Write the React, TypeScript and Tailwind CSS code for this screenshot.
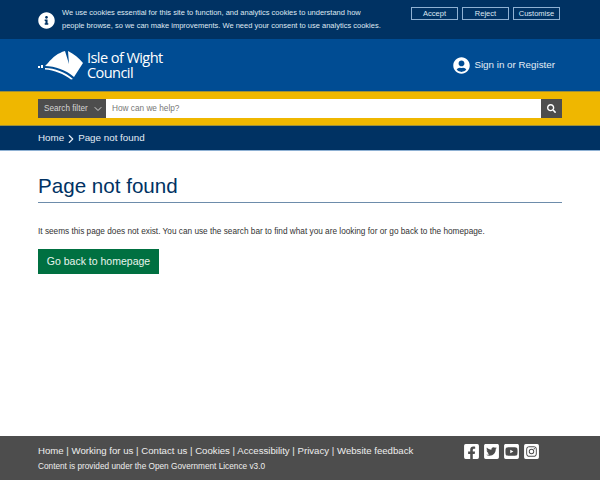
import { FaFacebookSquare, FaInfoCircle, FaInstagramSquare, FaSearch, FaTwitterSquare, FaUserCircle, FaYoutubeSquare } from "react-icons/fa";
import { ChevronDown, ChevronRight } from "lucide-react";

const footerLinks = ["Home", "Working for us", "Contact us", "Cookies", "Accessibility", "Privacy", "Website feedback"];

function Logo() {
  return (
    <svg width="46" height="30" viewBox="0 0 46 30" className="shrink-0">
      <path d="M10 13 C15 7 20 3 27 1 L31 14 L30 1 C36 4 41 8 45 13 L36 27 C28 20 17 16 7 16 Z" fill="#fff" />
      <path d="M7 18 C17 18 27 22 35 29 L33 29.5 C26 24 16 20 7 19.5 Z" fill="#fff" />
      <rect x="0" y="16" width="2" height="2" fill="#fff" />
      <rect x="3" y="15" width="2" height="3" fill="#fff" />
    </svg>
  );
}

export default function App() {
  return (
    <div className="flex h-[480px] w-[600px] flex-col overflow-hidden bg-white font-['Liberation_Sans',sans-serif] antialiased">
      {/* Cookie banner */}
      <div className="flex h-[39px] shrink-0 bg-[#003263] pl-[38px] pr-10 text-white">
        <FaInfoCircle className="mt-[12px] h-[17px] w-[17px] shrink-0" />
        <p className="ml-[7px] mt-[7px] w-[320px] text-[7.5px] leading-[12.5px] text-[#dfe8f2]">
          We use cookies essential for this site to function, and analytics cookies to understand how people browse, so we can make improvements. We need your consent to use analytics cookies.
        </p>
        <div className="ml-auto mt-[7px] flex gap-1">
          <button className="h-[13px] w-[47px] border border-[#8fb1d3] text-[7.5px] leading-none text-[#dfe8f2]">Accept</button>
          <button className="h-[13px] w-[47px] border border-[#8fb1d3] text-[7.5px] leading-none text-[#dfe8f2]">Reject</button>
          <button className="h-[13px] w-[47px] border border-[#8fb1d3] text-[7.5px] leading-none text-[#dfe8f2]">Customise</button>
        </div>
      </div>

      {/* Header */}
      <header className="flex h-[52px] shrink-0 items-center bg-[#004c93] pl-[38px] pr-[45px] text-white">
        <Logo />
        <div className="ml-[3px] font-['Open_Sans',sans-serif] text-[14.6px] leading-[15px] tracking-[-0.6px]">
          <div>Isle of Wight</div>
          <div>Council</div>
        </div>
        <a className="ml-auto flex items-center gap-1 text-[9.8px] text-[#e3ecf5]">
          <FaUserCircle className="h-[17px] w-[17px] text-white" />
          Sign in or Register
        </a>
      </header>

      {/* Search */}
      <div className="flex h-[35px] shrink-0 items-center border-y border-[#9c8f3a] bg-[#efb700] px-[38px]">
        <div className="flex h-[19px] w-[68px] items-center gap-[4px] bg-[#4d4d4d] pl-[6px] pt-[1px] text-[8.2px] text-[#d5d5d5]">
          Search filter
          <ChevronDown className="h-[12px] w-[12px]" />
        </div>
        <div className="flex h-[19px] flex-1 items-center bg-white px-[6px] pt-[1px] text-[8.25px] text-[#777]">How can we help?</div>
        <div className="flex h-[19px] w-[21px] items-center justify-center bg-[#4d4d4d] text-white">
          <FaSearch className="h-[9px] w-[9px]" />
        </div>
      </div>

      {/* Breadcrumb */}
      <nav className="flex h-[25px] shrink-0 items-center border-b border-[#8fb1d3] bg-[#003263] pl-[38px] pr-[38px] pt-[1px] text-[9.8px] text-[#e3ecf5]">
        Home
        <ChevronRight className="h-[14px] w-[14px]" />
        Page not found
      </nav>

      <main className="px-[38px]">
        <h1 className="mt-[22px] border-b border-[#6d8cab] pb-[3px] text-[20.6px] leading-[26px] text-[#003263]">Page not found</h1>
        <p className="mt-[23px] text-[8.25px] leading-[12px] text-[#333]">
          It seems this page does not exist. You can use the search bar to find what you are looking for or go back to the homepage.
        </p>
        <button className="mt-[11px] h-[25px] w-[121px] bg-[#007041] text-[10.5px] text-[#e8f5ee]">Go back to homepage</button>
      </main>

      {/* Footer */}
      <footer className="mt-auto flex h-[44px] shrink-0 bg-[#4d4d4d] pl-[38px] pr-[60px] text-white">
        <div>
          <div className="mt-[8px] text-[9.65px] leading-[14px] text-[#eee]">
            {footerLinks.map((link, i) => (
              <span key={link}>
                {i > 0 && " | "}
                {link}
              </span>
            ))}
          </div>
          <p className="mt-[3px] text-[8.25px] leading-[12px] text-[#eee]">Content is provided under the Open Government Licence v3.0</p>
        </div>
        <div className="ml-auto mt-[7px] flex gap-[3px]">
          <FaFacebookSquare className="h-[17px] w-[17px]" />
          <FaTwitterSquare className="h-[17px] w-[17px]" />
          <FaYoutubeSquare className="h-[17px] w-[17px]" />
          <FaInstagramSquare className="h-[17px] w-[17px]" />
        </div>
      </footer>
    </div>
  );
}
